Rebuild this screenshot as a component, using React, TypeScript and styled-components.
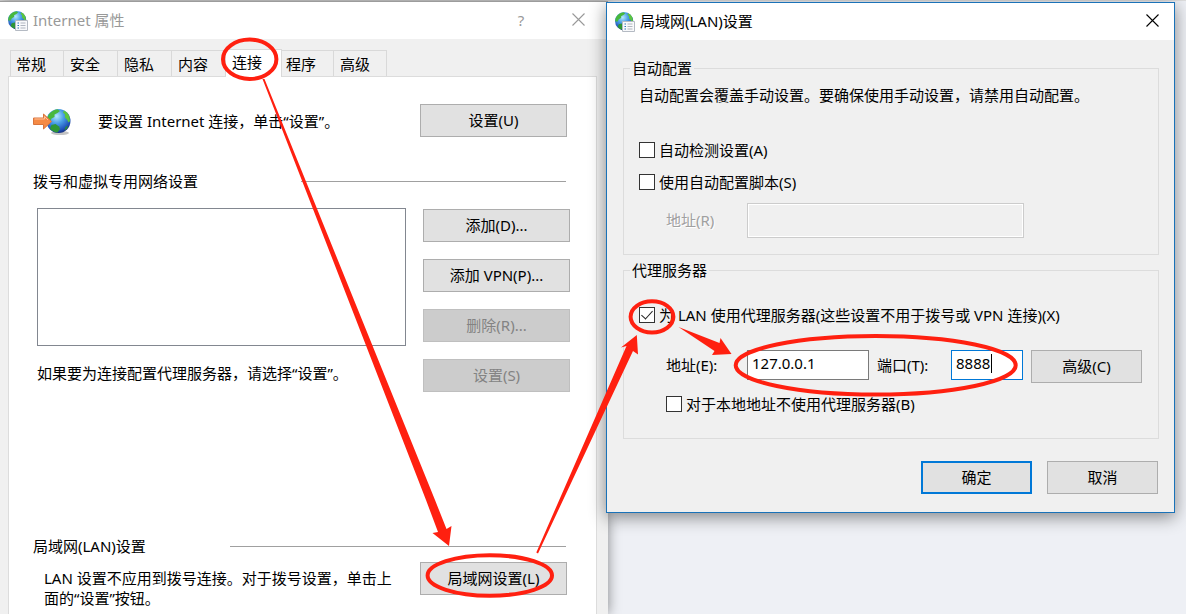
import React, { useId } from "react";
import styled, { createGlobalStyle, css } from "styled-components";

const GlobalStyle = createGlobalStyle`
  * { box-sizing: border-box; }
  body { margin: 0; background: #eef0f5; }
  body, button, input {
    font-family: "Noto Sans", "Noto Sans CJK SC", sans-serif;
    font-size: 15px;
    line-height: 20px;
    color: #000;
  }
  p, h2 { margin: 0; font-size: 15px; font-weight: 400; }
`;

const Desktop = styled.main`
  position: relative;
  display: flex;
  align-items: flex-start;
  min-width: 1100px;
  min-height: 100vh;
  overflow: hidden;
  background: linear-gradient(#dedede 1px, transparent 1px);
`;

const Window = styled.section<{ $active?: boolean }>`
  background: #f0f0f0;
  ${(p) =>
    p.$active
      ? css`
          position: relative;
          flex: 567 1 0;
          margin: 2px 11px 0 -2px;
          border: 1px solid #1a72b8;
          box-shadow: 0 4px 16px rgba(0, 0, 0, 0.45);
        `
      : css`
          flex: 608 1 0;
          min-height: calc(100vh - 1px);
          margin-top: 1px;
          border-top: 1px solid #9c9c9c;
          box-shadow: 0 0 12px rgba(0, 0, 0, 0.45);
        `}
`;

const TitleBar = styled.header<{ $active?: boolean }>`
  display: flex;
  align-items: center;
  height: 37px;
  padding: 0 15px 0 8px;
  background: #fff;
  color: ${(p) => (p.$active ? "#000" : "#999")};
`;

const Title = styled.h2`
  flex: 1;
  margin-left: 5px;
  padding-bottom: 2px;
`;

const CaptionButton = styled.button`
  display: flex;
  align-items: center;
  justify-content: center;
  width: 32px;
  height: 24px;
  margin-left: 25px;
  padding: 0 0 2px;
  border: 0;
  background: none;
  color: inherit;
  &:last-child { margin-right: -9px; }
`;

const TitleBarLeft = styled(TitleBar)`
  padding-right: 23px;
`;

const Tabs = styled.div`
  display: flex;
  align-items: flex-end;
  padding: 10px 0 0 10px;
`;

const Tab = styled.button<{ $selected?: boolean }>`
  width: 54px;
  height: 26px;
  padding: 0 0 0 5px;
  border: 1px solid #d9d9d9;
  border-bottom: 0;
  background: #f0f0f0;
  text-align: left;
  & + & { border-left: 0; padding-left: 6px; }
  &:last-child { width: 53px; }
  ${(p) =>
    p.$selected &&
    css`
      position: relative;
      width: 56px;
      height: 28px;
      margin: 0 -2px -1px 0;
      padding: 0 0 4px;
      background: #fff;
    `}
`;

const Panel = styled.div`
  display: flex;
  flex-direction: column;
  min-height: calc(100vh - 76px);
  margin: 0 11px 0 8px;
  padding-top: 27px;
  border: 1px solid #dcdcdc;
  border-bottom: 0;
  background: #fff;
`;

const SetupRow = styled.div`
  display: flex;
  align-items: center;
  padding: 0 29px 0 24px;
`;

const SetupText = styled.p`
  flex: 1;
  margin-left: 27px;
`;

const PushButton = styled.button<{ $narrow?: boolean; $primary?: boolean }>`
  flex: none;
  width: ${(p) => (p.$narrow ? 111 : 147)}px;
  height: 33px;
  padding: 0 0 2px;
  border: ${(p) => (p.$primary ? "2px solid #0078d7" : "1px solid #adadad")};
  background: #e1e1e1;
  &:disabled {
    border-color: #bfbfbf;
    background: #ccc;
    color: #838383;
  }
`;

const SectionHead = styled.div<{ $top: number; $gap: number }>`
  display: flex;
  align-items: center;
  gap: ${(p) => p.$gap}px;
  margin-top: ${(p) => p.$top}px;
  padding: 0 30px 0 24px;
  &::after {
    content: "";
    flex: 1;
    height: 1px;
    background: #a0a0a0;
  }
`;

const DialUpRow = styled.div`
  display: flex;
  gap: 17px;
  margin-top: 17px;
  padding: 0 26px 0 28px;
`;

const DialUpMain = styled.div`
  flex: 1;
`;

const ConnectionList = styled.div`
  height: 138px;
  margin-bottom: 17px;
  border: 1px solid #828790;
`;

const ButtonColumn = styled.div`
  display: flex;
  flex-direction: column;
  gap: 17px;
  padding-top: 1px;
`;

const LanRow = styled.div`
  display: flex;
  justify-content: space-between;
  margin-top: 6px;
  padding: 0 29px 0 35px;
`;

const LanText = styled.p`
  flex: 1;
  padding: 6px 20px 0 0;
`;

const DialogBody = styled.form`
  padding: 18px 15px 18px 16px;
`;

const Group = styled.fieldset<{ $bottom: number }>`
  margin: 0 0 5px;
  padding: 0 15px ${(p) => p.$bottom}px;
  border: 1px solid #dcdcdc;
`;

const Legend = styled.legend`
  margin-left: -9px;
  padding: 0 2px;
`;

const Note = styled.p`
  margin-top: 7px;
  padding-bottom: 1px;
`;

const CheckLabel = styled.label<{ $top: number; $indent?: boolean }>`
  display: flex;
  align-items: center;
  gap: 4px;
  margin: ${(p) => p.$top}px 0 0 ${(p) => (p.$indent ? 27 : 0)}px;
`;

const CheckInput = styled.input`
  appearance: none;
  position: relative;
  flex: none;
  width: 16px;
  height: 16px;
  margin: 0;
  border: 1px solid #333;
  background: #fff;
  &:checked::before {
    content: "";
    position: absolute;
    left: 4px;
    top: 0;
    width: 5px;
    height: 10px;
    border: solid #222;
    border-width: 0 1px 1px 0;
    transform: rotate(42deg);
  }
`;

const FieldRow = styled.div<{ $top: number; $right: number }>`
  display: flex;
  margin-top: ${(p) => p.$top}px;
  padding: 0 ${(p) => p.$right}px 0 27px;
`;

const FieldLabel = styled.label<{ $width: number; $disabled?: boolean }>`
  flex: none;
  width: ${(p) => p.$width}px;
  padding-top: 5px;
  ${(p) => p.$disabled && "padding-top: 7px; color: #a0a0a0; text-shadow: 1px 1px #fff;"}
`;

const TextInput = styled.input<{ $focused?: boolean }>`
  flex: 1;
  min-width: 0;
  width: 100%;
  height: 30px;
  padding: 0 4px 4px;
  border: 1px solid ${(p) => (p.$focused ? "#0078d7" : "#7a7a7a")};
  border-radius: 0;
  background: #fff;
  outline: 0;
  &:disabled {
    height: 35px;
    border-color: #ccc;
    background: #f0f0f0;
    box-shadow: inset 0 0 0 1px #fff;
  }
`;

const PortBox = styled.div`
  position: relative;
  flex: none;
  width: 72px;
  margin-right: 8px;
`;

const Caret = styled.span`
  position: absolute;
  left: 40px;
  top: 4px;
  width: 1px;
  height: 19px;
  background: #000;
`;

const ServerField = styled.div`
  display: flex;
  flex: 1;
  margin-right: 8px;
`;

const DialogActions = styled.div`
  display: flex;
  justify-content: flex-end;
  gap: 15px;
  margin-top: 22px;
  padding-right: 1px;
`;

const Annotations = styled.svg`
  position: absolute;
  top: 0;
  left: 0;
  width: 100%;
  height: 614px;
  pointer-events: none;
`;

function Globe({ id }: { id: string }) {
  return (
    <>
      <defs>
        <radialGradient id={id} cx="0.42" cy="0.3" r="0.75">
          <stop offset="0" stopColor="#b5e8ff" />
          <stop offset="0.4" stopColor="#4a9fe6" />
          <stop offset="0.8" stopColor="#1f50b8" />
          <stop offset="1" stopColor="#12246e" />
        </radialGradient>
      </defs>
      <circle cx="12" cy="12" r="12" fill={`url(#${id})`} />
      <path d="M2 6C4 2.500 8 .5 11 .2L13.500 2 11 4 8 5.500 8 8 5 9.500 3.500 12.500.3 12.500C.3 10 1 8 2 6Z" fill="#48b83c" />
      <path d="M17.500 1.500 20.500 3.500 22.800 7 23.600 12 22 13.500 20.500 10.500 18.500 8.500 18.500 5.500 16.500 3.500Z" fill="#5cc63e" />
      <path d="M5 16 9 15 12.500 17.500 13.500 20 11 23.500C8 23.300 5 22 3.500 19.500Z" fill="#2f9636" />
      <path d="M19 18 21.500 16.500 20.500 19.500 18 21.500Z" fill="#2b8c39" />
    </>
  );
}

function PropertiesIcon() {
  const id = useId();
  return (
    <svg width="20" height="20" viewBox="0 0 20 20" aria-hidden="true">
      <g transform="scale(.76)">
        <Globe id={id} />
      </g>
      <path d="M7.500 9.500H19.500V19.500H7.500Z" fill="#f8f9fb" stroke="#b4bac3" />
      <path d="M9.500 12H11M9.500 14.500H11M9.500 17H11" stroke="#2c72b8" />
      <path d="M12.500 12H17.500M12.500 14.500H17.500M12.500 17H17.500" stroke="#b0b6c0" />
    </svg>
  );
}

function ConnectIcon() {
  const id = useId();
  return (
    <svg width="38" height="30" viewBox="0 0 38 30" aria-hidden="true">
      <ellipse cx="27" cy="27" rx="9" ry="2" fill="#555" opacity=".35" />
      <g transform="translate(13.500 3)">
        <Globe id={id} />
      </g>
      <path d="M.5 12H10.500V8L18.500 15.500 10.500 23V18.500H.5Z" fill="#f58a45" stroke="#d9743c" />
      <path d="M1.500 13H11.500V10.500L15 14" fill="none" stroke="#ffc09a" />
    </svg>
  );
}

function CloseIcon() {
  return (
    <svg width="13" height="13" viewBox="0 0 13 13" aria-hidden="true">
      <path d="M.5.5 12.500 12.500M12.500.5.5 12.500" stroke="currentColor" strokeWidth="1.100" />
    </svg>
  );
}

const tabs = ["常规", "安全", "隐私", "内容", "连接", "程序", "高级"];

export default function App() {
  return (
    <>
      <GlobalStyle />
      <Desktop>
        <Window>
          <TitleBarLeft>
            <PropertiesIcon />
            <Title>Internet 属性</Title>
            <CaptionButton aria-label="帮助">?</CaptionButton>
            <CaptionButton aria-label="关闭">
              <CloseIcon />
            </CaptionButton>
          </TitleBarLeft>
          <Tabs role="tablist">
            {tabs.map((name) => (
              <Tab key={name} role="tab" aria-selected={name === "连接"} $selected={name === "连接"}>
                {name}
              </Tab>
            ))}
          </Tabs>
          <Panel role="tabpanel">
            <SetupRow>
              <ConnectIcon />
              <SetupText>要设置 Internet 连接，单击“设置”。</SetupText>
              <PushButton>设置(U)</PushButton>
            </SetupRow>
            <SectionHead $top={34} $gap={103}>
              <h2>拨号和虚拟专用网络设置</h2>
            </SectionHead>
            <DialUpRow>
              <DialUpMain>
                <ConnectionList role="listbox" aria-label="拨号和虚拟专用网络设置" />
                <p>如果要为连接配置代理服务器，请选择“设置”。</p>
              </DialUpMain>
              <ButtonColumn>
                <PushButton>添加(D)...</PushButton>
                <PushButton>添加 VPN(P)...</PushButton>
                <PushButton disabled>删除(R)...</PushButton>
                <PushButton disabled>设置(S)</PushButton>
              </ButtonColumn>
            </DialUpRow>
            <SectionHead $top={144} $gap={84}>
              <h2>局域网(LAN)设置</h2>
            </SectionHead>
            <LanRow>
              <LanText>LAN 设置不应用到拨号连接。对于拨号设置，单击上面的“设置”按钮。</LanText>
              <PushButton>局域网设置(L)</PushButton>
            </LanRow>
          </Panel>
        </Window>

        <Window $active>
          <TitleBar $active>
            <PropertiesIcon />
            <Title>局域网(LAN)设置</Title>
            <CaptionButton aria-label="关闭">
              <CloseIcon />
            </CaptionButton>
          </TitleBar>
          <DialogBody onSubmit={(e) => e.preventDefault()}>
            <Group $bottom={16}>
              <Legend>自动配置</Legend>
              <Note>自动配置会覆盖手动设置。要确保使用手动设置，请禁用自动配置。</Note>
              <CheckLabel $top={34}>
                <CheckInput type="checkbox" />
                自动检测设置(A)
              </CheckLabel>
              <CheckLabel $top={12}>
                <CheckInput type="checkbox" />
                使用自动配置脚本(S)
              </CheckLabel>
              <FieldRow $top={11} $right={119}>
                <FieldLabel htmlFor="script-url" $width={81} $disabled>
                  地址(R)
                </FieldLabel>
                <TextInput id="script-url" disabled />
              </FieldRow>
            </Group>
            <Group $bottom={24}>
              <Legend>代理服务器</Legend>
              <CheckLabel $top={25}>
                <CheckInput type="checkbox" defaultChecked />
                为 LAN 使用代理服务器(这些设置不用于拨号或 VPN 连接)(X)
              </CheckLabel>
              <FieldRow $top={25} $right={1}>
                <FieldLabel htmlFor="proxy-host" $width={81}>
                  地址(E):
                </FieldLabel>
                <ServerField>
                  <TextInput id="proxy-host" defaultValue="127.0.0.1" />
                </ServerField>
                <FieldLabel htmlFor="proxy-port" $width={74}>
                  端口(T):
                </FieldLabel>
                <PortBox>
                  <TextInput id="proxy-port" defaultValue="8888" $focused />
                  <Caret />
                </PortBox>
                <PushButton type="button" $narrow>
                  高级(C)
                </PushButton>
              </FieldRow>
              <CheckLabel $top={11} $indent>
                <CheckInput type="checkbox" />
                对于本地地址不使用代理服务器(B)
              </CheckLabel>
            </Group>
            <DialogActions>
              <PushButton $narrow $primary>
                确定
              </PushButton>
              <PushButton type="button" $narrow>
                取消
              </PushButton>
            </DialogActions>
          </DialogBody>
        </Window>

        <Annotations viewBox="0 0 1186 614" preserveAspectRatio="none" aria-hidden="true">
          <g fill="none" stroke="#ff2010" strokeWidth="4">
            <ellipse cx="249.700" cy="59.300" rx="26.700" ry="19.700" />
            <ellipse cx="489.800" cy="575.500" rx="62.200" ry="20.200" />
            <ellipse cx="652" cy="316.800" rx="21.400" ry="15.600" />
            <ellipse cx="875.700" cy="365.300" rx="140" ry="29.300" />
          </g>
          <g fill="#ff2010">
            <path d="M262.500 79 426 500 438 532 432.500 533 449 546 451.500 526 446.500 529 435 500 264.500 79Z" />
            <path d="M536.300 552.500 626.500 346 621 347.500 636.800 335 638 354.500 633 351 538 553.500Z" />
            <path d="M678.500 327 719.500 343 720.500 338 731.500 354 712 355 714.500 351Z" />
          </g>
        </Annotations>
      </Desktop>
    </>
  );
}
